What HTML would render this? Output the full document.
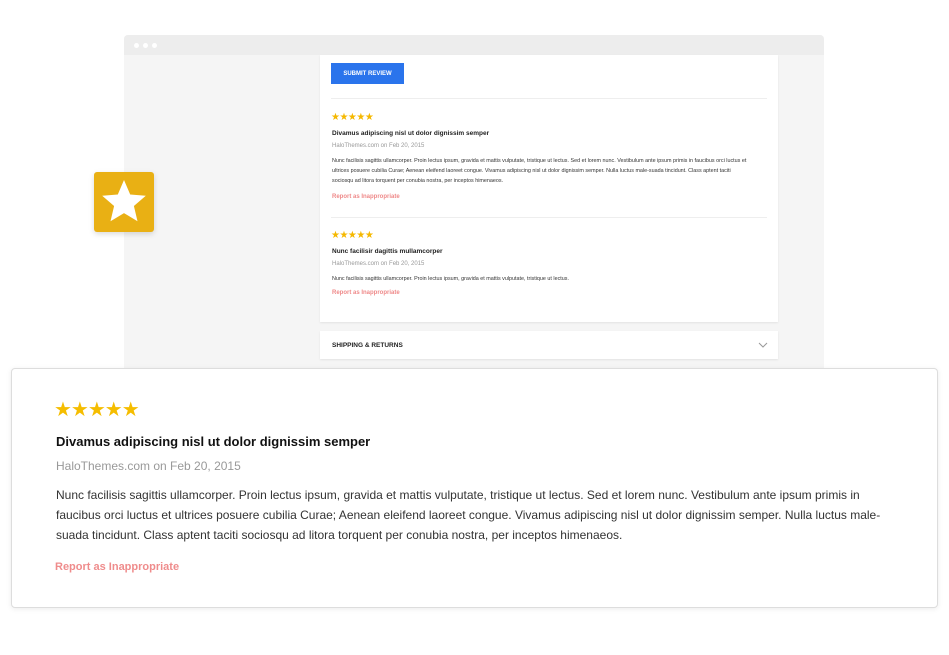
<!DOCTYPE html>
<html><head><style>
*{margin:0;padding:0;box-sizing:border-box}
body{width:949px;height:655px;background:#fff;font-family:"Liberation Sans",sans-serif;position:relative;overflow:hidden}
.a{position:absolute}
.win{left:124px;top:35px;width:700px;height:340px;background:#f5f5f5;border-radius:4px 4px 0 0;overflow:hidden}
.bar{left:0;top:0;width:700px;height:20px;background:#ededed}
.dot{width:5px;height:5px;border-radius:50%;background:#fff;top:8px}
.panel{left:196px;top:20px;width:458px;height:267px;background:#fff;box-shadow:0 1px 2px rgba(0,0,0,.08)}
.btn{left:11px;top:8px;width:73px;height:21px;background:#2a74ec;color:#fff;font-size:6px;font-weight:bold;text-align:center;line-height:22px}
.hr{left:11px;width:436px;height:1px;background:#eee}
.st{color:#f5b800;font-size:10px;letter-spacing:-0.5px}
.t{font-size:6.5px;font-weight:bold;color:#222}
.m{font-size:6px;color:#999}
.p{font-size:5.4px;color:#333;line-height:10px;width:420px}
.r{font-size:6px;color:#ef8a8a;font-weight:bold}
</style></head><body>
<div class="a win">
 <div class="a bar"></div>
 <div class="a dot" style="left:10px"></div><div class="a dot" style="left:19px"></div><div class="a dot" style="left:28px"></div>
 <div class="a panel">
  <div class="a btn">SUBMIT REVIEW</div>
  <div class="a hr" style="top:43px"></div>
  <div class="a st" style="left:11px;top:57px">★★★★★</div>
  <div class="a t" style="left:12px;top:75px">Divamus adipiscing nisl ut dolor dignissim semper</div>
  <div class="a m" style="left:12px;top:88px">HaloThemes.com on Feb 20, 2015</div>
  <div class="a p" style="left:12px;top:101px">Nunc facilisis sagittis ullamcorper. Proin lectus ipsum, gravida et mattis vulputate, tristique ut lectus. Sed et lorem nunc. Vestibulum ante ipsum primis in faucibus orci luctus et ultrices posuere cubilia Curae; Aenean eleifend laoreet congue. Vivamus adipiscing nisl ut dolor dignissim semper. Nulla luctus male-suada tincidunt. Class aptent taciti sociosqu ad litora torquent per conubia nostra, per inceptos himenaeos.</div>
  <div class="a r" style="left:12px;top:139px">Report as Inappropriate</div>
  <div class="a hr" style="top:162px"></div>
  <div class="a st" style="left:11px;top:175px">★★★★★</div>
  <div class="a t" style="left:12px;top:193px">Nunc facilisir dagittis mullamcorper</div>
  <div class="a m" style="left:12px;top:206px">HaloThemes.com on Feb 20, 2015</div>
  <div class="a p" style="left:12px;top:219px">Nunc facilisis sagittis ullamcorper. Proin lectus ipsum, gravida et mattis vulputate, tristique ut lectus.</div>
  <div class="a r" style="left:12px;top:235px">Report as Inappropriate</div>
 </div>
 <div class="a" style="left:196px;top:296px;width:458px;height:28px;background:#fff;box-shadow:0 1px 2px rgba(0,0,0,.08)">
  <div class="a t" style="left:12px;top:11px;font-size:6.5px">SHIPPING &amp; RETURNS</div>
  <svg class="a" style="left:438px;top:11px" width="10" height="6" viewBox="0 0 10 6"><path d="M1 1l4 4 4-4" fill="none" stroke="#999" stroke-width="1"/></svg>
 </div>
</div>
<div class="a" style="left:94px;top:172px;width:60px;height:60px;background:#e9b014;border-radius:3px;box-shadow:0 2px 6px rgba(0,0,0,.15)">
 <svg width="60" height="60" viewBox="0 0 60 60"><path d="M30 8l6.2 14.5 15.6 1.3-11.9 10.2 3.6 15.3L30 41.1l-13.5 8.2 3.6-15.3L8.2 23.8l15.6-1.3z" fill="#fff"/></svg>
</div>
<div class="a" style="left:11px;top:368px;width:927px;height:240px;background:#fff;border:1px solid #ddd;border-radius:4px;box-shadow:0 1px 6px rgba(0,0,0,.08)">
 <div class="a" style="left:42px;top:28px;color:#f5bd00;font-size:20px;letter-spacing:-1px">★★★★★</div>
 <div class="a" style="left:44px;top:65px;font-size:13px;font-weight:bold;color:#111">Divamus adipiscing nisl ut dolor dignissim semper</div>
 <div class="a" style="left:44px;top:90px;font-size:12px;color:#999">HaloThemes.com on Feb 20, 2015</div>
 <div class="a" style="left:44px;top:116px;width:840px;font-size:12px;line-height:20px;color:#333">Nunc facilisis sagittis ullamcorper. Proin lectus ipsum, gravida et mattis vulputate, tristique ut lectus. Sed et lorem nunc. Vestibulum ante ipsum primis in faucibus orci luctus et ultrices posuere cubilia Curae; Aenean eleifend laoreet congue. Vivamus adipiscing nisl ut dolor dignissim semper. Nulla luctus male-suada tincidunt. Class aptent taciti sociosqu ad litora torquent per conubia nostra, per inceptos himenaeos.</div>
 <div class="a" style="left:43px;top:192px;font-size:11px;font-weight:bold;color:#ef8c8c">Report as Inappropriate</div>
</div>
</body></html>
